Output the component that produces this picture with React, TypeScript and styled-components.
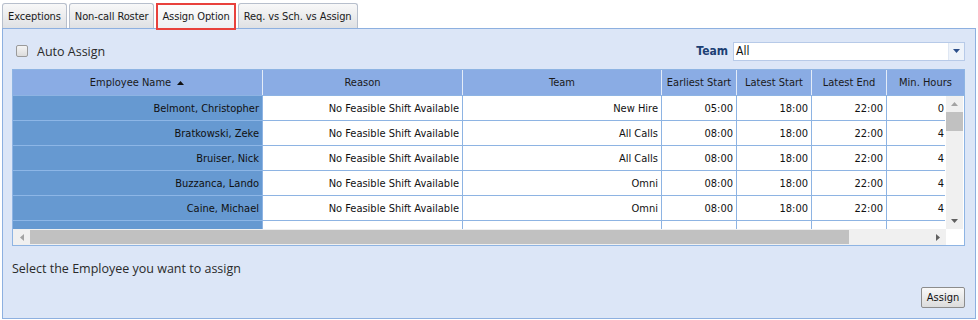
import React from 'react';
import styled, { createGlobalStyle, css } from 'styled-components';

const GlobalStyle = createGlobalStyle`
  body {
    margin: 0;
    background: #ffffff;
    font-family: 'DejaVu Sans Condensed', 'Liberation Sans', sans-serif;
  }
`;

const Page = styled.div`
  padding: 3px 0 0 2px;
  width: 974px;
`;

const TabStrip = styled.div`
  display: flex;
  align-items: flex-start;
  gap: 2px;
  height: 25px;
  position: relative;
  z-index: 1;
`;

const Tab = styled.div<{ $active?: boolean }>`
  box-sizing: border-box;
  height: 25px;
  padding: 0 5px;
  display: flex;
  align-items: center;
  font-size: 11px;
  letter-spacing: -0.1px;
  color: #1a1a1a;
  border: 1px solid #b7bfcc;
  border-bottom: none;
  border-radius: 3px 3px 0 0;
  background: linear-gradient(#f8f8f8, #dfe1e4);
  ${(p) =>
    p.$active &&
    css`
      height: 27px;
      padding: 0 4px;
      border: 2px solid #e8413c;
      border-radius: 0;
      background: linear-gradient(#fcfcfc, #eef0f3);
    `}
`;

const Panel = styled.div`
  box-sizing: border-box;
  height: 291px;
  border: 1px solid #8db0e0;
  background: #dce6f7;
  padding: 13px 10px 0 9px;
  display: flex;
  flex-direction: column;
`;

const Toolbar = styled.div`
  display: flex;
  align-items: center;
  justify-content: space-between;
  height: 18px;
  padding-left: 4px;
`;

const CheckLabel = styled.label`
  display: flex;
  align-items: center;
  gap: 9px;
  font-family: 'Open Sans', 'Liberation Sans', sans-serif;
  font-size: 12.5px;
  color: #2a2a2a;
`;

const CheckBox = styled.span`
  box-sizing: border-box;
  width: 12px;
  height: 12px;
  border: 1px solid #9a9a9a;
  border-radius: 2px;
  background: linear-gradient(#f4f4f4, #dcdcdc);
`;

const TeamFilter = styled.div`
  display: flex;
  align-items: center;
  gap: 5px;
`;

const TeamLabel = styled.span`
  font-size: 12px;
  font-weight: bold;
  color: #1c3f74;
`;

const Select = styled.div`
  box-sizing: border-box;
  width: 232px;
  height: 19px;
  border: 1px solid #b7cae8;
  background: #ffffff;
  display: flex;
  align-items: stretch;
`;

const SelectValue = styled.span`
  flex: 1;
  font-size: 12px;
  color: #111;
  padding-left: 2px;
  line-height: 16px;
`;

const SelectButton = styled.span`
  width: 15px;
  border-left: 1px solid #dfe7f3;
  background: #eef3fa;
  display: flex;
  align-items: center;
  justify-content: center;
`;

const Grid = styled.div`
  margin-top: 9px;
  border: 1px solid #8eb4e3;
  background: #ffffff;
  display: flex;
  flex-direction: column;
`;

const HeaderRow = styled.div`
  display: flex;
  height: 26px;
  background: #8aace4;
  border-bottom: 1px solid #8eb4e3;
  box-sizing: border-box;
`;

const HeaderCell = styled.div<{ $w: number }>`
  box-sizing: border-box;
  width: ${(p) => p.$w}px;
  flex: none;
  border-right: 1px solid #e4ecf8;
  display: flex;
  align-items: center;
  justify-content: center;
  gap: 5px;
  font-size: 11px;
  color: #1a1a1a;
  &:last-child {
    border-right: none;
    flex: 1;
  }
`;

const BodyWrap = styled.div`
  display: flex;
  height: 133px;
`;

const Viewport = styled.div`
  width: 933px;
  overflow: hidden;
`;

const Row = styled.div`
  display: flex;
  height: 25px;
`;

const Cell = styled.div<{ $w: number; $name?: boolean }>`
  box-sizing: border-box;
  width: ${(p) => p.$w}px;
  flex: none;
  border-right: 1px solid #8eb4e3;
  border-bottom: 1px solid #8eb4e3;
  display: flex;
  align-items: center;
  justify-content: flex-end;
  padding-right: 3px;
  font-size: 11px;
  color: #111;
  white-space: nowrap;
  overflow: hidden;
  &:last-child {
    border-right: none;
    padding-right: 1px;
  }
  ${(p) =>
    p.$name &&
    css`
      background: #6699d1;
      border-bottom-color: #8db6e6;
      color: #101010;
    `}
`;

const VScroll = styled.div`
  width: 17px;
  background: #f0f0f0;
  display: flex;
  flex-direction: column;
  align-items: center;
`;

const ArrowBox = styled.div<{ $h?: number }>`
  height: ${(p) => p.$h ?? 16}px;
  width: 17px;
  display: flex;
  align-items: center;
  justify-content: center;
`;

const VThumb = styled.div`
  width: 17px;
  height: 19px;
  background: #c1c1c1;
`;

const Spacer = styled.div`
  flex: 1;
`;

const HScrollRow = styled.div`
  display: flex;
  height: 16px;
`;

const HScroll = styled.div`
  width: 933px;
  background: #f0f0f0;
  display: flex;
  align-items: stretch;
`;

const HThumb = styled.div`
  width: 819px;
  background: #c1c1c1;
  margin: 1px 0;
`;

const Corner = styled.div`
  flex: 1;
  background: #ffffff;
`;

const Hint = styled.div`
  margin-top: 15px;
  font-family: 'Open Sans', 'Liberation Sans', sans-serif;
  font-size: 12.5px;
  line-height: 16px;
  color: #2a2a2a;
`;

const Footer = styled.div`
  margin-top: 10px;
  display: flex;
  justify-content: flex-end;
`;

const Button = styled.button`
  box-sizing: border-box;
  width: 44px;
  height: 21px;
  padding: 0;
  border: 1px solid #8c8c8c;
  border-radius: 2px;
  background: linear-gradient(#f8f8f8, #dcdcdc);
  font-family: 'DejaVu Sans Condensed', 'Liberation Sans', sans-serif;
  font-size: 11px;
  color: #111;
`;

type Dir = 'up' | 'down' | 'left' | 'right';

const Triangle: React.FC<{ dir: Dir; color: string; size?: number }> = ({ dir, color, size = 7 }) => {
  const pts: Record<Dir, string> = {
    up: '0,4 3.5,0 7,4',
    down: '0,0 7,0 3.5,4',
    left: '4,0 4,7 0,3.5',
    right: '0,0 0,7 4,3.5',
  };
  const vertical = dir === 'up' || dir === 'down';
  return (
    <svg
      width={vertical ? size : 4}
      height={vertical ? 4 : size}
      viewBox={vertical ? '0 0 7 4' : '0 0 4 7'}
    >
      <polygon points={pts[dir]} fill={color} />
    </svg>
  );
};

const headers = ['Employee Name', 'Reason', 'Team', 'Earliest Start', 'Latest Start', 'Latest End', 'Min. Hours'];
const widths = [250, 200, 199, 75, 75, 75, 75];

const rows = [
  ['Belmont, Christopher', 'No Feasible Shift Available', 'New Hire', '05:00', '18:00', '22:00', '0'],
  ['Bratkowski, Zeke', 'No Feasible Shift Available', 'All Calls', '08:00', '18:00', '22:00', '4'],
  ['Bruiser, Nick', 'No Feasible Shift Available', 'All Calls', '08:00', '18:00', '22:00', '4'],
  ['Buzzanca, Lando', 'No Feasible Shift Available', 'Omni', '08:00', '18:00', '22:00', '4'],
  ['Caine, Michael', 'No Feasible Shift Available', 'Omni', '08:00', '18:00', '22:00', '4'],
  ['Carranza, Luis', 'No Feasible Shift Available', 'All Calls', '08:00', '18:00', '22:00', '4'],
];

// the last column is cut by the vertical scrollbar
const bodyWidths = [250, 200, 199, 75, 75, 75, 58];

const App: React.FC = () => (
  <>
    <GlobalStyle />
    <Page>
      <TabStrip>
        <Tab>Exceptions</Tab>
        <Tab>Non-call Roster</Tab>
        <Tab $active>Assign Option</Tab>
        <Tab>Req. vs Sch. vs Assign</Tab>
      </TabStrip>
      <Panel>
        <Toolbar>
          <CheckLabel>
            <CheckBox />
            Auto Assign
          </CheckLabel>
          <TeamFilter>
            <TeamLabel>Team</TeamLabel>
            <Select>
              <SelectValue>All</SelectValue>
              <SelectButton>
                <Triangle dir="down" color="#2c4f8a" />
              </SelectButton>
            </Select>
          </TeamFilter>
        </Toolbar>

        <Grid>
          <HeaderRow>
            {headers.map((h, i) => (
              <HeaderCell key={h} $w={widths[i]}>
                {h}
                {i === 0 && <Triangle dir="up" color="#111" size={9} />}
              </HeaderCell>
            ))}
          </HeaderRow>
          <BodyWrap>
            <Viewport>
              {rows.map((r) => (
                <Row key={r[0]}>
                  {r.map((v, i) => (
                    <Cell key={i} $w={bodyWidths[i]} $name={i === 0}>
                      {v}
                    </Cell>
                  ))}
                </Row>
              ))}
            </Viewport>
            <VScroll>
              <ArrowBox>
                <Triangle dir="up" color="#a3a3a3" />
              </ArrowBox>
              <VThumb />
              <Spacer />
              <ArrowBox>
                <Triangle dir="down" color="#606060" />
              </ArrowBox>
            </VScroll>
          </BodyWrap>
          <HScrollRow>
            <HScroll>
              <ArrowBox $h={16}>
                <Triangle dir="left" color="#a3a3a3" />
              </ArrowBox>
              <HThumb />
              <Spacer />
              <ArrowBox $h={16}>
                <Triangle dir="right" color="#606060" />
              </ArrowBox>
            </HScroll>
            <Corner />
          </HScrollRow>
        </Grid>

        <Hint>Select the Employee you want to assign</Hint>
        <Footer>
          <Button>Assign</Button>
        </Footer>
      </Panel>
    </Page>
  </>
);

export default App;
